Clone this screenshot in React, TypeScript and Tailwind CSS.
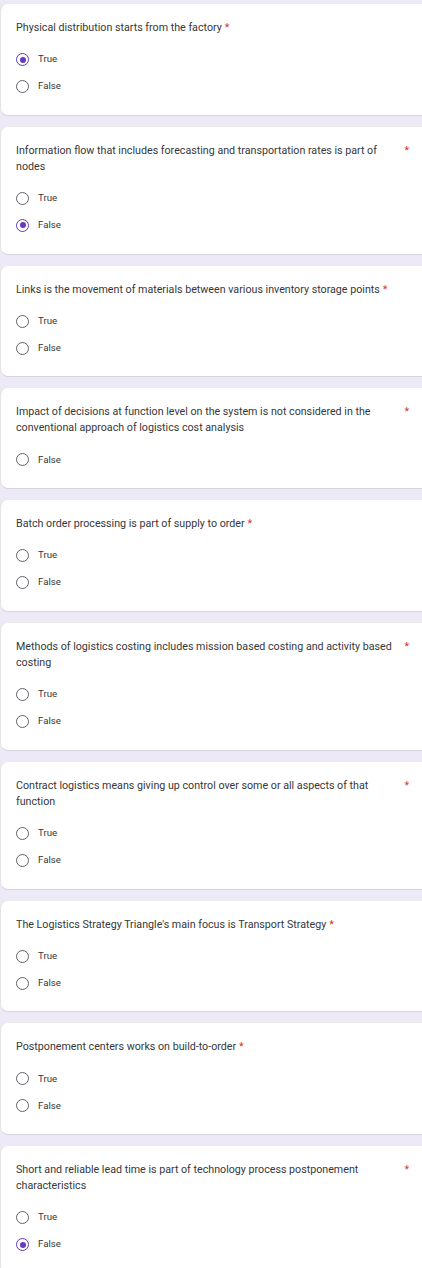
const questions: { title: string; options: string[]; selected: string | null }[] = [
  { title: "Physical distribution starts from the factory", options: ["True", "False"], selected: "True" },
  {
    title: "Information flow that includes forecasting and transportation rates is part of nodes",
    options: ["True", "False"],
    selected: "False",
  },
  {
    title: "Links is the movement of materials between various inventory storage points",
    options: ["True", "False"],
    selected: null,
  },
  {
    title:
      "Impact of decisions at function level on the system is not considered in the conventional approach of logistics cost analysis",
    options: ["False"],
    selected: null,
  },
  { title: "Batch order processing is part of supply to order", options: ["True", "False"], selected: null },
  {
    title: "Methods of logistics costing includes mission based costing and activity based costing",
    options: ["True", "False"],
    selected: null,
  },
  {
    title: "Contract logistics means giving up control over some or all aspects of that function",
    options: ["True", "False"],
    selected: null,
  },
  {
    title: "The Logistics Strategy Triangle's main focus is Transport Strategy",
    options: ["True", "False"],
    selected: null,
  },
  { title: "Postponement centers works on build-to-order", options: ["True", "False"], selected: null },
  {
    title: "Short and reliable lead time is part of technology process postponement characteristics",
    options: ["True", "False"],
    selected: "False",
  },
]

function Radio({ checked }: { checked: boolean }) {
  return (
    <span
      className={
        checked
          ? "shrink-0 w-[13px] h-[13px] rounded-full border-[1.5px] border-[#673ab7] flex items-center justify-center"
          : "shrink-0 w-[13px] h-[13px] rounded-full border-[1.5px] border-[#5f6368]"
      }
    >
      {checked && <span className="w-[6px] h-[6px] rounded-full bg-[#673ab7]" />}
    </span>
  )
}

function QuestionCard({ title, options, selected }: (typeof questions)[number]) {
  return (
    <section className="bg-white rounded-l-lg border-y border-l border-t-[#ebebeb] border-b-[#d6d4df] border-l-[#e4e4e4] pl-[15px] pr-[13px] pt-4 pb-[14.8px]">
      <div className="flex items-start text-[10.7px] leading-4 text-[#36373a]">
        <span>{title}</span>
        <span className="text-[#d93025] pl-[3px]">*</span>
      </div>
      <div className="mt-[10px] flex flex-col">
        {options.map((o) => (
          <label key={o} className="h-[27px] flex items-center gap-[9px]">
            <Radio checked={o === selected} />
            <span className="text-[9.7px] text-[#36373a]">{o}</span>
          </label>
        ))}
      </div>
    </section>
  )
}

export default function App() {
  return (
    <div
      className="min-h-screen bg-[#ede9f6] pt-[3px] pb-6 flex flex-col gap-[10px]"
      style={{ fontFamily: "Roboto, 'Noto Sans', sans-serif" }}
    >
      {questions.map((q) => (
        <QuestionCard key={q.title} {...q} />
      ))}
    </div>
  )
}
